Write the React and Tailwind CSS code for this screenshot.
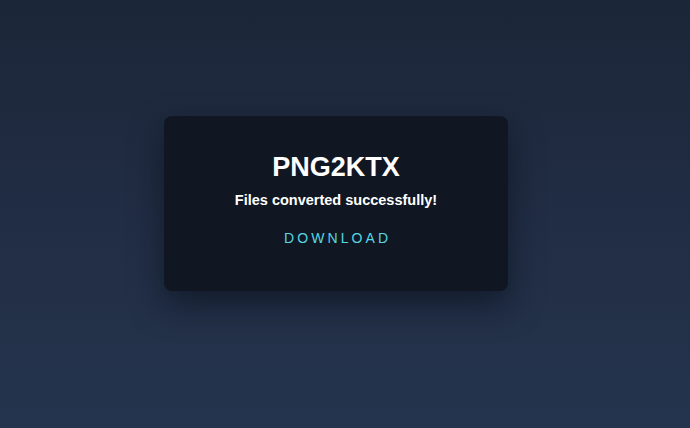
export default function App() {
    return (
        <div className="min-h-screen w-full bg-gradient-to-b from-[#1c2639] to-[#25344e] flex items-center justify-center pr-[18px] pb-[22px] font-['Liberation_Sans',Arial,sans-serif]">
            <div className="w-[344px] h-[175px] rounded-lg bg-[#111722] shadow-[0_14px_32px_rgba(8,12,22,0.55)] flex flex-col items-center pt-[38px]">
                <h1 className="text-[27px] leading-none font-bold text-white">PNG2KTX</h1>
                <p className="mt-[12px] text-[14.5px] leading-none font-bold text-white">
                    Files converted successfully!
                </p>
                <button className="mt-[24px] pl-[0.22em] text-[14px] leading-none tracking-[0.22em] text-[#58d6e3]">
                    DOWNLOAD
                </button>
            </div>
        </div>
    );
}
